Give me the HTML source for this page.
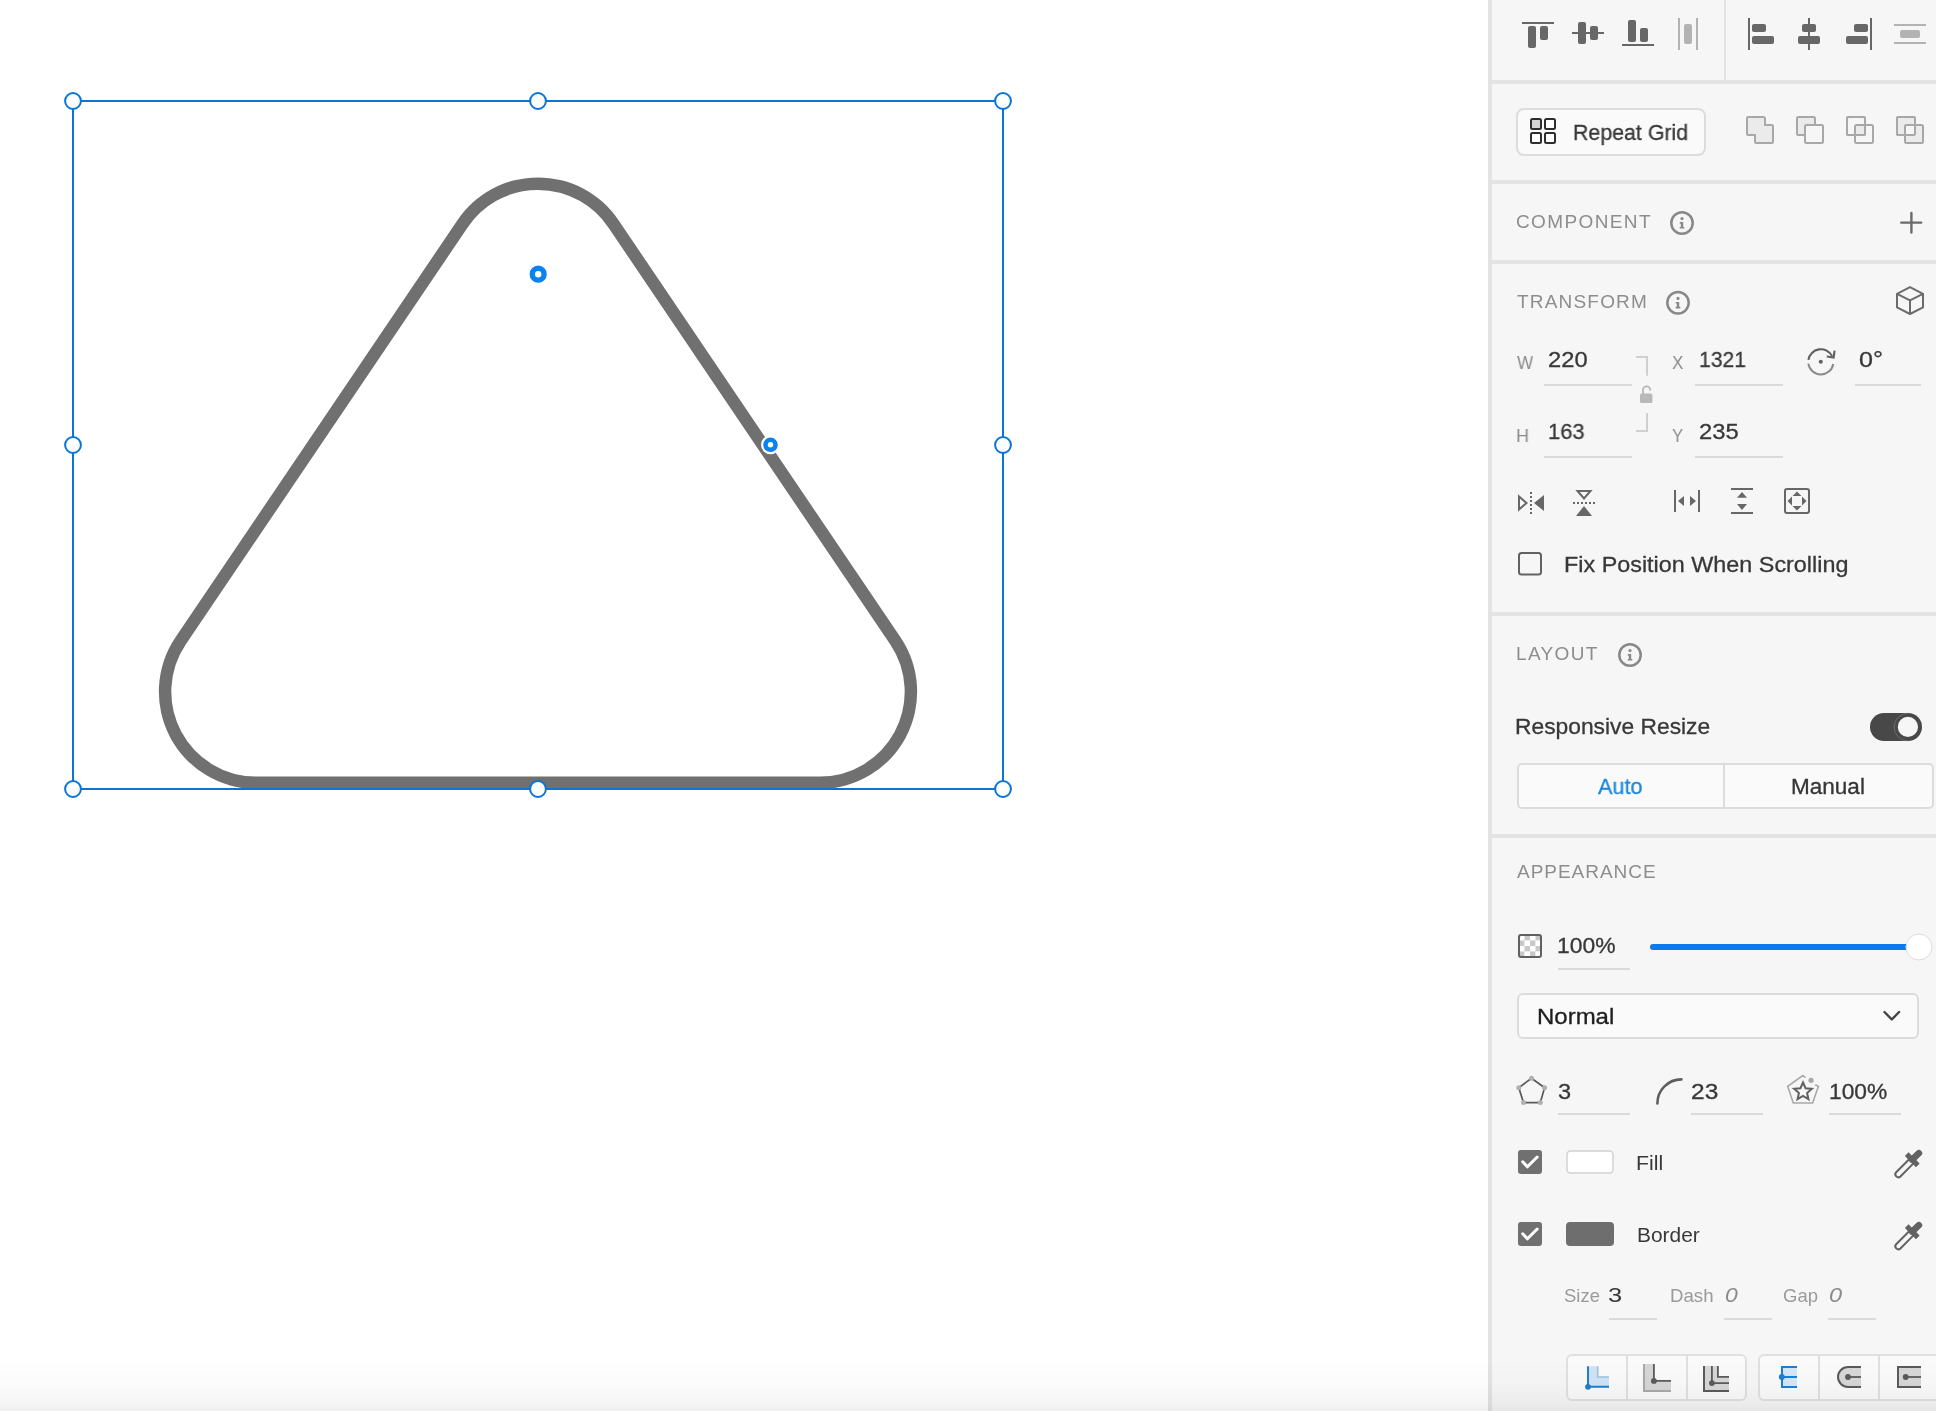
<!DOCTYPE html>
<html><head><meta charset="utf-8"><title>XD</title>
<style>html,body{margin:0;padding:0;}body{width:1936px;height:1411px;overflow:hidden;position:relative;background:#ffffff;}</style>
</head><body>
<svg width="1488" height="1411" style="position:absolute;left:0;top:0">
<defs><clipPath id="tc"><path d="M457.45,220.19 A97.23,97.23 0 0 1 618.55,220.19 L900.49,637.33 A97.23,97.23 0 0 1 819.93,789 L256.07,789 A97.23,97.23 0 0 1 175.51,637.33 Z"/></clipPath></defs>
<path d="M457.45,220.19 A97.23,97.23 0 0 1 618.55,220.19 L900.49,637.33 A97.23,97.23 0 0 1 819.93,789 L256.07,789 A97.23,97.23 0 0 1 175.51,637.33 Z" fill="#ffffff" stroke="#707070" stroke-width="25" clip-path="url(#tc)"/>
<rect x="73" y="101" width="930" height="688" fill="none" stroke="#0b74d6" stroke-width="2"/>
<circle cx="73" cy="101" r="7.9" fill="#fff" stroke="#0b74d6" stroke-width="2"/>
<circle cx="538" cy="101" r="7.9" fill="#fff" stroke="#0b74d6" stroke-width="2"/>
<circle cx="1003" cy="101" r="7.9" fill="#fff" stroke="#0b74d6" stroke-width="2"/>
<circle cx="73" cy="445" r="7.9" fill="#fff" stroke="#0b74d6" stroke-width="2"/>
<circle cx="1003" cy="445" r="7.9" fill="#fff" stroke="#0b74d6" stroke-width="2"/>
<circle cx="73" cy="789" r="7.9" fill="#fff" stroke="#0b74d6" stroke-width="2"/>
<circle cx="538" cy="789" r="7.9" fill="#fff" stroke="#0b74d6" stroke-width="2"/>
<circle cx="1003" cy="789" r="7.9" fill="#fff" stroke="#0b74d6" stroke-width="2"/>
<circle cx="538.2" cy="274.2" r="5.9" fill="#fff" stroke="#0a82f0" stroke-width="5.4"/>
<circle cx="770.5" cy="444.8" r="9.5" fill="#fff"/>
<circle cx="770.5" cy="444.8" r="5" fill="#fff" stroke="#0a82f0" stroke-width="4.6"/>
</svg>
<div style="position:absolute;left:1488px;top:0;width:448px;height:1411px;background:#f6f6f6"></div>
<div style="position:absolute;left:1488px;top:0;width:4px;height:1411px;background:#e3e3e3"></div>
<div style="position:absolute;left:1492px;top:80px;width:444px;height:4px;background:#e3e3e3"></div>
<div style="position:absolute;left:1492px;top:180px;width:444px;height:4px;background:#e3e3e3"></div>
<div style="position:absolute;left:1492px;top:260px;width:444px;height:4px;background:#e3e3e3"></div>
<div style="position:absolute;left:1492px;top:612px;width:444px;height:4px;background:#e3e3e3"></div>
<div style="position:absolute;left:1492px;top:834px;width:444px;height:4px;background:#e3e3e3"></div>
<div style="position:absolute;left:1724px;top:0;width:2px;height:80px;background:#e3e3e3"></div>
<div style="position:absolute;left:1516px;top:108px;width:190px;height:48px;box-sizing:border-box;border:2px solid #dcdcdc;border-radius:8px;background:#fafafa"></div>
<div style="position:absolute;left:1517px;top:763px;width:417px;height:46px;box-sizing:border-box;border:2px solid #dcdcdc;border-radius:5px;background:#fafafa"></div>
<div style="position:absolute;left:1723px;top:765px;width:2px;height:42px;background:#dcdcdc"></div>
<div style="position:absolute;left:1517px;top:993px;width:402px;height:46px;box-sizing:border-box;border:2px solid #dcdcdc;border-radius:6px;background:#fafafa"></div>
<div style="position:absolute;left:1566px;top:1354px;width:181px;height:47px;box-sizing:border-box;border:2px solid #e0e0e0;border-radius:6px;background:#fafafa"></div>
<div style="position:absolute;left:1758px;top:1354px;width:202px;height:47px;box-sizing:border-box;border:2px solid #e0e0e0;border-radius:6px;background:#fafafa"></div>
<div style="position:absolute;left:1626.2px;top:1356px;width:1.8px;height:43px;background:#e0e0e0"></div>
<div style="position:absolute;left:1686.2px;top:1356px;width:1.8px;height:43px;background:#e0e0e0"></div>
<div style="position:absolute;left:1818.4px;top:1356px;width:1.8px;height:43px;background:#e0e0e0"></div>
<div style="position:absolute;left:1878.2px;top:1356px;width:1.8px;height:43px;background:#e0e0e0"></div>
<div style="position:absolute;left:1544px;top:384px;width:88px;height:2px;background:#dadada"></div>
<div style="position:absolute;left:1695px;top:384px;width:88px;height:2px;background:#dadada"></div>
<div style="position:absolute;left:1855px;top:384px;width:66px;height:2px;background:#dadada"></div>
<div style="position:absolute;left:1544px;top:456px;width:88px;height:2px;background:#dadada"></div>
<div style="position:absolute;left:1695px;top:456px;width:88px;height:2px;background:#dadada"></div>
<div style="position:absolute;left:1558px;top:968px;width:72px;height:2px;background:#dadada"></div>
<div style="position:absolute;left:1558px;top:1112.5px;width:72px;height:2px;background:#dadada"></div>
<div style="position:absolute;left:1691px;top:1112.5px;width:72px;height:2px;background:#dadada"></div>
<div style="position:absolute;left:1829px;top:1112.5px;width:72px;height:2px;background:#dadada"></div>
<div style="position:absolute;left:1609px;top:1318px;width:48px;height:2px;background:#dadada"></div>
<div style="position:absolute;left:1724px;top:1318px;width:48px;height:2px;background:#dadada"></div>
<div style="position:absolute;left:1828px;top:1318px;width:48px;height:2px;background:#dadada"></div>
<div style="will-change:transform;position:absolute;font-family:'Liberation Sans',sans-serif;font-size:22.6px;line-height:0;white-space:nowrap;color:#383838;-webkit-text-stroke:0.3px #383838;left:1573.11px;top:132.67px;transform:scaleX(0.9445);transform-origin:0 0;">Repeat Grid</div>
<div style="will-change:transform;position:absolute;font-family:'Liberation Sans',sans-serif;font-size:19.0px;line-height:0;white-space:nowrap;color:#8d8d8d;left:1516px;top:221.92px;letter-spacing:1.375px;">COMPONENT</div>
<div style="will-change:transform;position:absolute;font-family:'Liberation Sans',sans-serif;font-size:19.0px;line-height:0;white-space:nowrap;color:#8d8d8d;left:1517px;top:301.92px;letter-spacing:1.188px;">TRANSFORM</div>
<div style="will-change:transform;position:absolute;font-family:'Liberation Sans',sans-serif;font-size:19.0px;line-height:0;white-space:nowrap;color:#8a8a8a;left:1516.5px;top:363.42px;transform:scaleX(0.9028);transform-origin:0 0;">W</div>
<div style="will-change:transform;position:absolute;font-family:'Liberation Sans',sans-serif;font-size:22.3px;line-height:0;white-space:nowrap;color:#383838;-webkit-text-stroke:0.3px #383838;left:1547.94px;top:359.77px;transform:scaleX(1.0639);transform-origin:0 0;">220</div>
<div style="will-change:transform;position:absolute;font-family:'Liberation Sans',sans-serif;font-size:19.0px;line-height:0;white-space:nowrap;color:#8a8a8a;left:1672.3px;top:363.42px;transform:scaleX(0.8917);transform-origin:0 0;">X</div>
<div style="will-change:transform;position:absolute;font-family:'Liberation Sans',sans-serif;font-size:22.3px;line-height:0;white-space:nowrap;color:#383838;-webkit-text-stroke:0.3px #383838;left:1699.05px;top:359.77px;transform:scaleX(0.9479);transform-origin:0 0;">1321</div>
<div style="will-change:transform;position:absolute;font-family:'Liberation Sans',sans-serif;font-size:22.3px;line-height:0;white-space:nowrap;color:#383838;-webkit-text-stroke:0.3px #383838;left:1859.17px;top:359.77px;transform:scaleX(1.1263);transform-origin:0 0;">0°</div>
<div style="will-change:transform;position:absolute;font-family:'Liberation Sans',sans-serif;font-size:19.0px;line-height:0;white-space:nowrap;color:#8a8a8a;left:1516.05px;top:435.92px;transform:scaleX(0.9500);transform-origin:0 0;">H</div>
<div style="will-change:transform;position:absolute;font-family:'Liberation Sans',sans-serif;font-size:22.3px;line-height:0;white-space:nowrap;color:#383838;-webkit-text-stroke:0.3px #383838;left:1548.02px;top:431.77px;transform:scaleX(0.9833);transform-origin:0 0;">163</div>
<div style="will-change:transform;position:absolute;font-family:'Liberation Sans',sans-serif;font-size:19.0px;line-height:0;white-space:nowrap;color:#8a8a8a;left:1672.3px;top:435.92px;transform:scaleX(0.8750);transform-origin:0 0;">Y</div>
<div style="will-change:transform;position:absolute;font-family:'Liberation Sans',sans-serif;font-size:22.3px;line-height:0;white-space:nowrap;color:#383838;-webkit-text-stroke:0.3px #383838;left:1698.93px;top:431.77px;transform:scaleX(1.0667);transform-origin:0 0;">235</div>
<div style="will-change:transform;position:absolute;font-family:'Liberation Sans',sans-serif;font-size:22.2px;line-height:0;white-space:nowrap;color:#383838;-webkit-text-stroke:0.3px #383838;left:1563.69px;top:565.31px;transform:scaleX(1.0532);transform-origin:0 0;">Fix Position When Scrolling</div>
<div style="will-change:transform;position:absolute;font-family:'Liberation Sans',sans-serif;font-size:19.0px;line-height:0;white-space:nowrap;color:#8d8d8d;left:1516.2px;top:653.92px;letter-spacing:1.360px;">LAYOUT</div>
<div style="will-change:transform;position:absolute;font-family:'Liberation Sans',sans-serif;font-size:22.2px;line-height:0;white-space:nowrap;color:#383838;-webkit-text-stroke:0.3px #383838;left:1515.14px;top:727.31px;transform:scaleX(1.0278);transform-origin:0 0;">Responsive Resize</div>
<div style="will-change:transform;position:absolute;font-family:'Liberation Sans',sans-serif;font-size:22.2px;line-height:0;white-space:nowrap;color:#1b86db;-webkit-text-stroke:0.3px #1b86db;left:1598px;top:787.21px;transform:scaleX(0.9756);transform-origin:0 0;">Auto</div>
<div style="will-change:transform;position:absolute;font-family:'Liberation Sans',sans-serif;font-size:22.2px;line-height:0;white-space:nowrap;color:#353535;-webkit-text-stroke:0.3px #353535;left:1790.77px;top:787.21px;transform:scaleX(1.0157);transform-origin:0 0;">Manual</div>
<div style="will-change:transform;position:absolute;font-family:'Liberation Sans',sans-serif;font-size:19.0px;line-height:0;white-space:nowrap;color:#8d8d8d;left:1516.6px;top:871.92px;letter-spacing:0.967px;">APPEARANCE</div>
<div style="will-change:transform;position:absolute;font-family:'Liberation Sans',sans-serif;font-size:22.2px;line-height:0;white-space:nowrap;color:#383838;-webkit-text-stroke:0.3px #383838;left:1557.37px;top:946.31px;transform:scaleX(1.0327);transform-origin:0 0;">100%</div>
<div style="will-change:transform;position:absolute;font-family:'Liberation Sans',sans-serif;font-size:22.2px;line-height:0;white-space:nowrap;color:#1e1e1e;-webkit-text-stroke:0.3px #1e1e1e;left:1536.64px;top:1016.81px;transform:scaleX(1.0809);transform-origin:0 0;">Normal</div>
<div style="will-change:transform;position:absolute;font-family:'Liberation Sans',sans-serif;font-size:22.2px;line-height:0;white-space:nowrap;color:#383838;-webkit-text-stroke:0.3px #383838;left:1557.94px;top:1091.81px;transform:scaleX(1.0636);transform-origin:0 0;">3</div>
<div style="will-change:transform;position:absolute;font-family:'Liberation Sans',sans-serif;font-size:22.2px;line-height:0;white-space:nowrap;color:#383838;-webkit-text-stroke:0.3px #383838;left:1690.5px;top:1091.81px;transform:scaleX(1.1043);transform-origin:0 0;">23</div>
<div style="will-change:transform;position:absolute;font-family:'Liberation Sans',sans-serif;font-size:22.2px;line-height:0;white-space:nowrap;color:#383838;-webkit-text-stroke:0.3px #383838;left:1828.57px;top:1091.81px;transform:scaleX(1.0273);transform-origin:0 0;">100%</div>
<div style="will-change:transform;position:absolute;font-family:'Liberation Sans',sans-serif;font-size:20.5px;line-height:0;white-space:nowrap;color:#383838;left:1636.26px;top:1162.9px;transform:scaleX(1.0375);transform-origin:0 0;">Fill</div>
<div style="will-change:transform;position:absolute;font-family:'Liberation Sans',sans-serif;font-size:20.5px;line-height:0;white-space:nowrap;color:#383838;left:1636.58px;top:1234.7px;transform:scaleX(1.0197);transform-origin:0 0;">Border</div>
<div style="will-change:transform;position:absolute;font-family:'Liberation Sans',sans-serif;font-size:18.5px;line-height:0;white-space:nowrap;color:#9a9a9a;left:1563.7px;top:1295.59px;transform:scaleX(0.9971);transform-origin:0 0;">Size</div>
<div style="will-change:transform;position:absolute;font-family:'Liberation Sans',sans-serif;font-size:20.68px;line-height:0;white-space:nowrap;color:#383838;left:1608.37px;top:1294.83px;transform:scaleX(1.2300);transform-origin:0 0;">3</div>
<div style="will-change:transform;position:absolute;font-family:'Liberation Sans',sans-serif;font-size:18.5px;line-height:0;white-space:nowrap;color:#9a9a9a;left:1670.49px;top:1295.59px;transform:scaleX(1.0071);transform-origin:0 0;">Dash</div>
<div style="will-change:transform;position:absolute;font-family:'Liberation Sans',sans-serif;font-size:20.68px;line-height:0;white-space:nowrap;color:#8a8a8a;font-style:italic;left:1725.39px;top:1294.83px;transform:scaleX(1.1091);transform-origin:0 0;">0</div>
<div style="will-change:transform;position:absolute;font-family:'Liberation Sans',sans-serif;font-size:18.5px;line-height:0;white-space:nowrap;color:#9a9a9a;left:1783.4px;top:1295.59px;transform:scaleX(1.0000);transform-origin:0 0;">Gap</div>
<div style="will-change:transform;position:absolute;font-family:'Liberation Sans',sans-serif;font-size:20.68px;line-height:0;white-space:nowrap;color:#8a8a8a;font-style:italic;left:1829.36px;top:1294.83px;transform:scaleX(1.1364);transform-origin:0 0;">0</div>

<svg width="1936" height="1411" style="position:absolute;left:0;top:0">
<rect x="1522" y="22" width="32" height="2" rx="0" fill="#676767"/>
<rect x="1528" y="26" width="8" height="22" rx="2" fill="#676767"/>
<rect x="1540" y="26" width="8" height="14" rx="2" fill="#676767"/>
<rect x="1572" y="32" width="32" height="2" rx="0" fill="#676767"/>
<rect x="1578" y="22" width="8" height="22" rx="2" fill="#676767"/>
<rect x="1590" y="26" width="8" height="14" rx="2" fill="#676767"/>
<rect x="1622" y="44" width="32" height="2" rx="0" fill="#676767"/>
<rect x="1628" y="20" width="8" height="22" rx="2" fill="#676767"/>
<rect x="1640" y="28" width="8" height="14" rx="2" fill="#676767"/>
<rect x="1678" y="18" width="2" height="32" rx="0" fill="#b3b3b3"/>
<rect x="1696" y="18" width="2" height="32" rx="0" fill="#b3b3b3"/>
<rect x="1684" y="24" width="8" height="20" rx="2" fill="#b3b3b3"/>
<rect x="1748" y="18" width="2" height="32" rx="0" fill="#676767"/>
<rect x="1752" y="24" width="14" height="8" rx="2" fill="#676767"/>
<rect x="1752" y="36" width="22" height="8" rx="2" fill="#676767"/>
<rect x="1808" y="18" width="2" height="32" rx="0" fill="#676767"/>
<rect x="1802" y="24" width="14" height="8" rx="2" fill="#676767"/>
<rect x="1798" y="36" width="22" height="8" rx="2" fill="#676767"/>
<rect x="1870" y="18" width="2" height="32" rx="0" fill="#676767"/>
<rect x="1854" y="24" width="14" height="8" rx="2" fill="#676767"/>
<rect x="1846" y="36" width="22" height="8" rx="2" fill="#676767"/>
<rect x="1894" y="24" width="32" height="2" rx="0" fill="#b3b3b3"/>
<rect x="1894" y="42" width="32" height="2" rx="0" fill="#b3b3b3"/>
<rect x="1900" y="30" width="20" height="8" rx="2" fill="#b3b3b3"/>
<rect x="1531" y="119" width="10" height="10" rx="1.5" fill="#d5d5d5" stroke="#2e2e2e" stroke-width="2"/>
<rect x="1545" y="119" width="10" height="10" rx="1.5" fill="#fff" stroke="#2e2e2e" stroke-width="2"/>
<rect x="1531" y="133" width="10" height="10" rx="1.5" fill="#fff" stroke="#2e2e2e" stroke-width="2"/>
<rect x="1545" y="133" width="10" height="10" rx="1.5" fill="#fff" stroke="#2e2e2e" stroke-width="2"/>
<path d="M1747,118.5 a1.5,1.5 0 0 1 1.5,-1.5 h15 a1.5,1.5 0 0 1 1.5,1.5 v6.5 h6.5 a1.5,1.5 0 0 1 1.5,1.5 v15 a1.5,1.5 0 0 1 -1.5,1.5 h-15 a1.5,1.5 0 0 1 -1.5,-1.5 v-6.5 h-6.5 a1.5,1.5 0 0 1 -1.5,-1.5 z" fill="#ebebeb" stroke="#a8a8a8" stroke-width="2"/>
<rect x="1797" y="117" width="18" height="18" rx="1.5" fill="#ebebeb" stroke="#a8a8a8" stroke-width="2"/>
<rect x="1805" y="125" width="18" height="18" rx="1.5" fill="#f6f6f6" stroke="#a8a8a8" stroke-width="2"/>
<rect x="1847" y="117" width="18" height="18" rx="1.5" fill="#f6f6f6" stroke="#a8a8a8" stroke-width="2"/>
<rect x="1855" y="125" width="10" height="10" fill="#ebebeb"/>
<rect x="1847" y="117" width="18" height="18" rx="1.5" fill="none" stroke="#a8a8a8" stroke-width="2"/>
<rect x="1855" y="125" width="18" height="18" rx="1.5" fill="none" stroke="#a8a8a8" stroke-width="2"/>
<rect x="1897" y="117" width="18" height="18" rx="1.5" fill="#ebebeb" stroke="#a8a8a8" stroke-width="2"/>
<rect x="1905" y="125" width="18" height="18" rx="1.5" fill="#ebebeb"/>
<rect x="1905" y="125" width="10" height="10" fill="#f6f6f6"/>
<rect x="1897" y="117" width="18" height="18" rx="1.5" fill="none" stroke="#a8a8a8" stroke-width="2"/>
<rect x="1905" y="125" width="18" height="18" rx="1.5" fill="none" stroke="#a8a8a8" stroke-width="2"/>
<circle cx="1682" cy="223" r="10.7" fill="none" stroke="#888888" stroke-width="2.5"/>
<circle cx="1682" cy="218.6" r="1.55" fill="#888888"/>
<path d="M1679.8,222.1 h3.4 v4.9 h1.1 v1.6 h-4.6 v-1.6 h1.1 v-3.3 h-1 z" fill="#888888"/>
<circle cx="1678" cy="302.8" r="10.7" fill="none" stroke="#888888" stroke-width="2.5"/>
<circle cx="1678" cy="298.40000000000003" r="1.55" fill="#888888"/>
<path d="M1675.8,301.90000000000003 h3.4 v4.9 h1.1 v1.6 h-4.6 v-1.6 h1.1 v-3.3 h-1 z" fill="#888888"/>
<circle cx="1630" cy="655" r="10.7" fill="none" stroke="#888888" stroke-width="2.5"/>
<circle cx="1630" cy="650.6" r="1.55" fill="#888888"/>
<path d="M1627.8,654.1 h3.4 v4.9 h1.1 v1.6 h-4.6 v-1.6 h1.1 v-3.3 h-1 z" fill="#888888"/>
<path d="M1901.2,222.6 h20 M1911.4,213 v19.6" stroke="#6b6b6b" stroke-width="2.4" stroke-linecap="round" fill="none"/>
<path d="M1910,287.2 L1923,293.8 L1923,307.4 L1910,314 L1897,307.4 L1897,293.8 Z M1897,293.8 L1910,300.3 L1923,293.8 M1910,300.3 V314" fill="none" stroke="#6b6b6b" stroke-width="2" stroke-linejoin="round"/>
<path d="M1636,357 H1647 V375.7 M1647,413 V431 H1636" fill="none" stroke="#d0d0d0" stroke-width="2"/>
<rect x="1640" y="393.4" width="12.4" height="9.6" rx="1.5" fill="#b9b9b9"/>
<path d="M1643,394 V390 a3.6,3.6 0 0 1 7.2,0 v0.5" fill="none" stroke="#b9b9b9" stroke-width="1.9"/>
<path d="M1808.41,359.83 A12.6,12.6 0 0 1 1832.08,356.08" fill="none" stroke="#5f5f5f" stroke-width="2.1"/>
<path d="M1834.6,350.6 L1833.6,357.5 L1826.8,356.5" fill="none" stroke="#5f5f5f" stroke-width="2.1" stroke-linejoin="miter"/>
<path d="M1833.26,363.99 A12.6,12.6 0 0 1 1808.37,363.55" fill="none" stroke="#8a8a8a" stroke-width="2"/>
<circle cx="1820.8" cy="361.8" r="2" fill="#5f5f5f"/>
<path d="M1519,496.5 L1519,509.5 L1526.5,503 Z" fill="none" stroke="#676767" stroke-width="2" stroke-linejoin="miter"/>
<rect x="1530" y="492" width="2" height="2" fill="#676767"/>
<rect x="1530" y="496" width="2" height="2" fill="#676767"/>
<rect x="1530" y="500" width="2" height="2" fill="#676767"/>
<rect x="1530" y="504" width="2" height="2" fill="#676767"/>
<rect x="1530" y="508" width="2" height="2" fill="#676767"/>
<rect x="1530" y="512" width="2" height="2" fill="#676767"/>
<path d="M1544,495 L1544,511 L1534,503 Z" fill="#676767"/>
<path d="M1577.5,491 L1590.5,491 L1584,498.5 Z" fill="none" stroke="#676767" stroke-width="2"/>
<rect x="1573" y="502" width="2" height="2" fill="#676767"/>
<rect x="1577" y="502" width="2" height="2" fill="#676767"/>
<rect x="1581" y="502" width="2" height="2" fill="#676767"/>
<rect x="1585" y="502" width="2" height="2" fill="#676767"/>
<rect x="1589" y="502" width="2" height="2" fill="#676767"/>
<rect x="1593" y="502" width="2" height="2" fill="#676767"/>
<path d="M1576,516 L1592,516 L1584,506 Z" fill="#676767"/>
<rect x="1674" y="490" width="2" height="22" rx="0" fill="#676767"/>
<rect x="1698" y="490" width="2" height="22" rx="0" fill="#676767"/>
<path d="M1678,501 L1684,496 L1684,506 Z M1696,501 L1690,496 L1690,506 Z" fill="#676767"/>
<rect x="1731" y="488" width="22" height="2" rx="0" fill="#676767"/>
<rect x="1731" y="512" width="22" height="2" rx="0" fill="#676767"/>
<path d="M1742,492 L1747,497.7 L1737,497.7 Z M1742,510 L1747,504 L1737,504 Z" fill="#676767"/>
<rect x="1785" y="489" width="24" height="24" rx="2" fill="none" stroke="#676767" stroke-width="2"/>
<path d="M1797,491.5 L1801.5,496 L1792.5,496 Z M1797,510.5 L1801.5,506 L1792.5,506 Z M1787.5,501 L1792,496.5 L1792,505.5 Z M1806.5,501 L1802,496.5 L1802,505.5 Z" fill="#676767"/>
<rect x="1519" y="553" width="22" height="21.5" rx="2.5" fill="none" stroke="#626262" stroke-width="2"/>
<rect x="1870" y="713" width="52" height="28" rx="14" fill="#484848"/>
<path d="M1907.9,713.2 A13.6,13.6 0 0 0 1907.9,740.8" fill="none" stroke="#7a7a7a" stroke-width="0.7"/>
<circle cx="1907.9" cy="726.9" r="10.1" fill="#f6f6f6"/>
<rect x="1519.00" y="935.00" width="5.6" height="5.6" fill="#ffffff"/>
<rect x="1519.00" y="940.50" width="5.6" height="5.6" fill="#c8c8c8"/>
<rect x="1519.00" y="946.00" width="5.6" height="5.6" fill="#ffffff"/>
<rect x="1519.00" y="951.50" width="5.6" height="5.6" fill="#c8c8c8"/>
<rect x="1524.50" y="935.00" width="5.6" height="5.6" fill="#c8c8c8"/>
<rect x="1524.50" y="940.50" width="5.6" height="5.6" fill="#ffffff"/>
<rect x="1524.50" y="946.00" width="5.6" height="5.6" fill="#c8c8c8"/>
<rect x="1524.50" y="951.50" width="5.6" height="5.6" fill="#ffffff"/>
<rect x="1530.00" y="935.00" width="5.6" height="5.6" fill="#ffffff"/>
<rect x="1530.00" y="940.50" width="5.6" height="5.6" fill="#c8c8c8"/>
<rect x="1530.00" y="946.00" width="5.6" height="5.6" fill="#ffffff"/>
<rect x="1530.00" y="951.50" width="5.6" height="5.6" fill="#c8c8c8"/>
<rect x="1535.50" y="935.00" width="5.6" height="5.6" fill="#c8c8c8"/>
<rect x="1535.50" y="940.50" width="5.6" height="5.6" fill="#ffffff"/>
<rect x="1535.50" y="946.00" width="5.6" height="5.6" fill="#c8c8c8"/>
<rect x="1535.50" y="951.50" width="5.6" height="5.6" fill="#ffffff"/>
<rect x="1519" y="935" width="22" height="22" rx="2" fill="none" stroke="#606060" stroke-width="2"/>
<rect x="1650" y="944" width="272" height="6" rx="3" fill="#0a7af0"/>
<circle cx="1919" cy="947" r="13" fill="#ffffff" stroke="#dcdcdc" stroke-width="1"/>
<path d="M1884.5,1012 L1891.8,1019.5 L1899.1,1012" fill="none" stroke="#444" stroke-width="2.4" stroke-linecap="round" stroke-linejoin="round"/>
<path d="M1531.5,1078.2 L1544.6,1087.7 L1540.3,1102.6 L1523.5,1102.6 L1518.8,1087.7 Z" fill="none" stroke="#5a5a5a" stroke-width="1.7"/>
<circle cx="1531.5" cy="1078.2" r="2.5" fill="#b0b0b0"/>
<circle cx="1544.6" cy="1087.7" r="2.5" fill="#b0b0b0"/>
<circle cx="1540.3" cy="1102.6" r="2.5" fill="#b0b0b0"/>
<circle cx="1523.5" cy="1102.6" r="2.5" fill="#b0b0b0"/>
<circle cx="1518.8" cy="1087.7" r="2.5" fill="#b0b0b0"/>
<path d="M1657.4,1103.4 A24,24 0 0 1 1681.4,1079.4" fill="none" stroke="#5e5e5e" stroke-width="2.6" stroke-linecap="round"/>
<path d="M1805.4,1077.6 L1802.8,1075.6 L1787.7,1086.4 L1793.3,1103 L1812.6,1103 L1818.4,1086.4 L1815.3,1084.7" fill="none" stroke="#a8a8a8" stroke-width="1.6"/>
<circle cx="1811" cy="1080.3" r="2.6" fill="#a8a8a8"/>
<path d="M1803.00,1082.40 L1805.53,1088.22 L1811.84,1088.83 L1807.09,1093.03 L1808.47,1099.22 L1803.00,1096.00 L1797.53,1099.22 L1798.91,1093.03 L1794.16,1088.83 L1800.47,1088.22 Z" fill="none" stroke="#606060" stroke-width="2" stroke-linejoin="miter"/>
<rect x="1518" y="1150" width="24" height="24" rx="3" fill="#707070"/>
<path d="M1522.7,1161.8 L1527.4,1166.8 L1537.2,1157" fill="none" stroke="#fff" stroke-width="3" stroke-linecap="round" stroke-linejoin="round"/>
<rect x="1518" y="1222" width="24" height="24" rx="3" fill="#707070"/>
<path d="M1522.7,1233.8 L1527.4,1238.8 L1537.2,1229" fill="none" stroke="#fff" stroke-width="3" stroke-linecap="round" stroke-linejoin="round"/>
<rect x="1567" y="1151" width="46" height="22" rx="3.5" fill="#ffffff" stroke="#d2d2d2" stroke-width="1.5"/>
<rect x="1566" y="1222" width="48" height="24" rx="4" fill="#6e6e6e"/>
<g transform="translate(1888,1144)"><path d="M21.2,15.2 L8.18,28.18 A3,3 0 0 0 12.42,32.42 L25.4,19.4" fill="none" stroke="#626262" stroke-width="2"/><path d="M18.7,10.2 L29.8,21.3" stroke="#626262" stroke-width="5.2"/><path d="M24.2,15.6 L30.9,9.2" stroke="#626262" stroke-width="6.6" stroke-linecap="round"/></g>
<g transform="translate(1888,1216)"><path d="M21.2,15.2 L8.18,28.18 A3,3 0 0 0 12.42,32.42 L25.4,19.4" fill="none" stroke="#626262" stroke-width="2"/><path d="M18.7,10.2 L29.8,21.3" stroke="#626262" stroke-width="5.2"/><path d="M24.2,15.6 L30.9,9.2" stroke="#626262" stroke-width="6.6" stroke-linecap="round"/></g>
<path d="M1589,1366.2 H1598.4 V1377 H1609 V1386.8 H1589 Z" fill="#cfe3f5"/>
<path d="M1597.7,1366.2 V1377 H1609" fill="none" stroke="#9cc3e6" stroke-width="1.6"/>
<path d="M1588,1366.2 V1386.8 H1609" fill="none" stroke="#1a7fd4" stroke-width="2"/>
<circle cx="1588" cy="1386.8" r="2.9" fill="#1a7fd4"/>
<path d="M1643,1364 H1654 V1381 H1671 V1392 H1643 Z" fill="#d6d6d6"/>
<path d="M1644,1364 V1391 H1671" fill="none" stroke="#a9a9a9" stroke-width="2"/>
<path d="M1653.9,1364 V1380.9 H1671" fill="none" stroke="#5a5a5a" stroke-width="1.8"/>
<circle cx="1653.9" cy="1380.9" r="2.9" fill="#5a5a5a"/>
<path d="M1704,1366 H1718 V1377 H1729 V1391 H1704 Z" fill="#d6d6d6"/>
<path d="M1704,1366 V1391 H1729" fill="none" stroke="#5a5a5a" stroke-width="2"/>
<path d="M1711.9,1366 V1383.1 H1729" fill="none" stroke="#5a5a5a" stroke-width="1.8"/>
<path d="M1717.9,1366 V1376.9 H1729" fill="none" stroke="#5a5a5a" stroke-width="1.8"/>
<circle cx="1711.9" cy="1383.1" r="2.9" fill="#5a5a5a"/>
<rect x="1782" y="1367" width="15" height="20" fill="#d5e6f7"/>
<path d="M1797,1367 H1782 V1387 H1797 M1782,1377 H1797" fill="none" stroke="#1a7fd4" stroke-width="2"/>
<circle cx="1781.8" cy="1377" r="3" fill="#1a7fd4"/>
<path d="M1861,1367 H1848 A10,10 0 0 0 1848,1387 H1861" fill="#d6d6d6" stroke="#5a5a5a" stroke-width="2"/>
<path d="M1848,1377 H1861" stroke="#5a5a5a" stroke-width="1.8"/>
<circle cx="1848" cy="1377" r="2.9" fill="#5a5a5a"/>
<path d="M1921,1367 H1898 V1387 H1921" fill="#d6d6d6" stroke="#5a5a5a" stroke-width="2"/>
<path d="M1905.7,1377 H1921" stroke="#5a5a5a" stroke-width="1.8"/>
<circle cx="1905.7" cy="1377" r="2.9" fill="#5a5a5a"/>
</svg>
<div style="position:absolute;left:0;top:1359px;width:1936px;height:52px;background:linear-gradient(rgba(0,0,0,0) 0%,rgba(0,0,0,0.012) 45%,rgba(0,0,0,0.035) 80%,rgba(0,0,0,0.06) 100%)"></div>
</body></html>
